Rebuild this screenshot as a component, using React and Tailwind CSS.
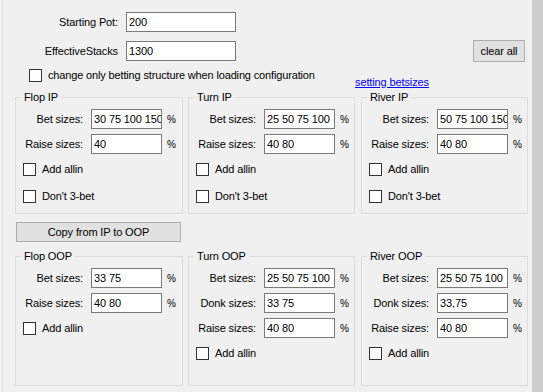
import React from "react";

const FONT = { fontFamily: '"Liberation Sans", Arial, sans-serif' };

function Field({ label, value }) {
  return (
    <div className="flex items-center h-[20px]">
      <div className="w-[67px] text-right whitespace-nowrap">{label}</div>
      <div className="ml-[8px] w-[71px] h-[20px] border border-[#7a7a7a] bg-white pl-[2px] leading-[18px] overflow-hidden whitespace-nowrap">
        {value}
      </div>
      <div className="ml-[5px] text-[10px]">%</div>
    </div>
  );
}

function Check({ label, className = "" }) {
  return (
    <div className={"flex items-center h-[13px] pl-[7px] " + className}>
      <div className="w-[13px] h-[13px] border border-[#333333] bg-white shrink-0" />
      <div className="ml-[6px] whitespace-nowrap leading-[13px]">{label}</div>
    </div>
  );
}

function Box({ title, width, className = "", height, children }) {
  return (
    <fieldset
      className={"border border-[#dcdcdc] min-w-0 shrink-0 " + className}
      style={{ width, height }}
    >
      <legend className="ml-[5px] px-[3px] leading-[13px]">{title}</legend>
      <div className="pt-[5px] flex flex-col">{children}</div>
    </fieldset>
  );
}

export default function App() {
  return (
    <div
      className="flex w-[543px] h-[392px] bg-[#f0f0f0] overflow-hidden text-[11px] tracking-[-0.12px] text-black"
      style={FONT}
    >
      <div className="w-[2px] shrink-0" />
      <div className="w-px shrink-0 bg-[#e2e2e2]" />
      <div className="w-[529px] shrink-0 flex flex-col">
        {/* Row 1 */}
        <div className="mt-[12px] flex items-center h-[20px]">
          <div className="w-[115px] text-right">Starting Pot:</div>
          <div className="ml-[8px] w-[110px] h-[20px] border border-[#7a7a7a] bg-white pl-[2px] leading-[18px]">
            200
          </div>
        </div>
        {/* Row 2 */}
        <div className="mt-[9px] flex items-center h-[20px]">
          <div className="w-[115px] text-right">EffectiveStacks</div>
          <div className="ml-[8px] w-[110px] h-[20px] border border-[#7a7a7a] bg-white pl-[2px] leading-[18px]">
            1300
          </div>
          <div className="ml-auto mr-[7px] w-[52px] h-[22px] border border-[#adadad] bg-[#e1e1e1] flex items-center justify-center">
            clear all
          </div>
        </div>
        {/* Row 3 */}
        <div className="mt-[8px] flex items-start">
          <div className="w-[352px] flex items-center h-[13px] pl-[26px]">
            <div className="w-[13px] h-[13px] border border-[#333333] bg-white shrink-0" />
            <div className="ml-[6px] whitespace-nowrap tracking-[-0.15px]">
              change only betting structure when loading configuration
            </div>
          </div>
          <div className="mt-[7px] leading-[13px] text-[#0000ff] underline whitespace-nowrap">
            setting betsizes
          </div>
        </div>
        {/* IP groups */}
        <div className="mt-[2px] flex ml-[12px]">
          <Box title="Flop IP" width={168} height={123}>
            <Field label="Bet sizes:" value="30 75 100 150" />
            <div className="mt-[5px]">
              <Field label="Raise sizes:" value="40" />
            </div>
            <Check label="Add allin" className="mt-[9px]" />
            <Check label="Don't 3-bet" className="mt-[14px]" />
          </Box>
          <Box title="Turn IP" width={167} height={123} className="ml-[5px]">
            <Field label="Bet sizes:" value="25 50 75 100" />
            <div className="mt-[5px]">
              <Field label="Raise sizes:" value="40 80" />
            </div>
            <Check label="Add allin" className="mt-[9px]" />
            <Check label="Don't 3-bet" className="mt-[14px]" />
          </Box>
          <Box title="River IP" width={167} height={123} className="ml-[6px]">
            <Field label="Bet sizes:" value="50 75 100 150" />
            <div className="mt-[5px]">
              <Field label="Raise sizes:" value="40 80" />
            </div>
            <Check label="Add allin" className="mt-[9px]" />
            <Check label="Don't 3-bet" className="mt-[14px]" />
          </Box>
        </div>
        {/* Copy button */}
        <div className="mt-[8px] ml-[13px] w-[165px] h-[20px] border border-[#adadad] bg-[#e1e1e1] flex items-center justify-center">
          Copy from IP to OOP
        </div>
        {/* OOP groups */}
        <div className="mt-[8px] flex ml-[12px]">
          <Box title="Flop OOP" width={168} height={136}>
            <Field label="Bet sizes:" value="33 75" />
            <div className="mt-[5px]">
              <Field label="Raise sizes:" value="40 80" />
            </div>
            <Check label="Add allin" className="mt-[9px]" />
          </Box>
          <Box title="Turn OOP" width={167} height={136} className="ml-[5px]">
            <Field label="Bet sizes:" value="25 50 75 100" />
            <div className="mt-[5px]">
              <Field label="Donk sizes:" value="33 75" />
            </div>
            <div className="mt-[5px]">
              <Field label="Raise sizes:" value="40 80" />
            </div>
            <Check label="Add allin" className="mt-[9px]" />
          </Box>
          <Box title="River OOP" width={167} height={136} className="ml-[6px]">
            <Field label="Bet sizes:" value="25 50 75 100" />
            <div className="mt-[5px]">
              <Field label="Donk sizes:" value="33,75" />
            </div>
            <div className="mt-[5px]">
              <Field label="Raise sizes:" value="40 80" />
            </div>
            <Check label="Add allin" className="mt-[9px]" />
          </Box>
        </div>
      </div>
      <div className="w-[11px] shrink-0 bg-[#cdcdcd]" />
    </div>
  );
}
